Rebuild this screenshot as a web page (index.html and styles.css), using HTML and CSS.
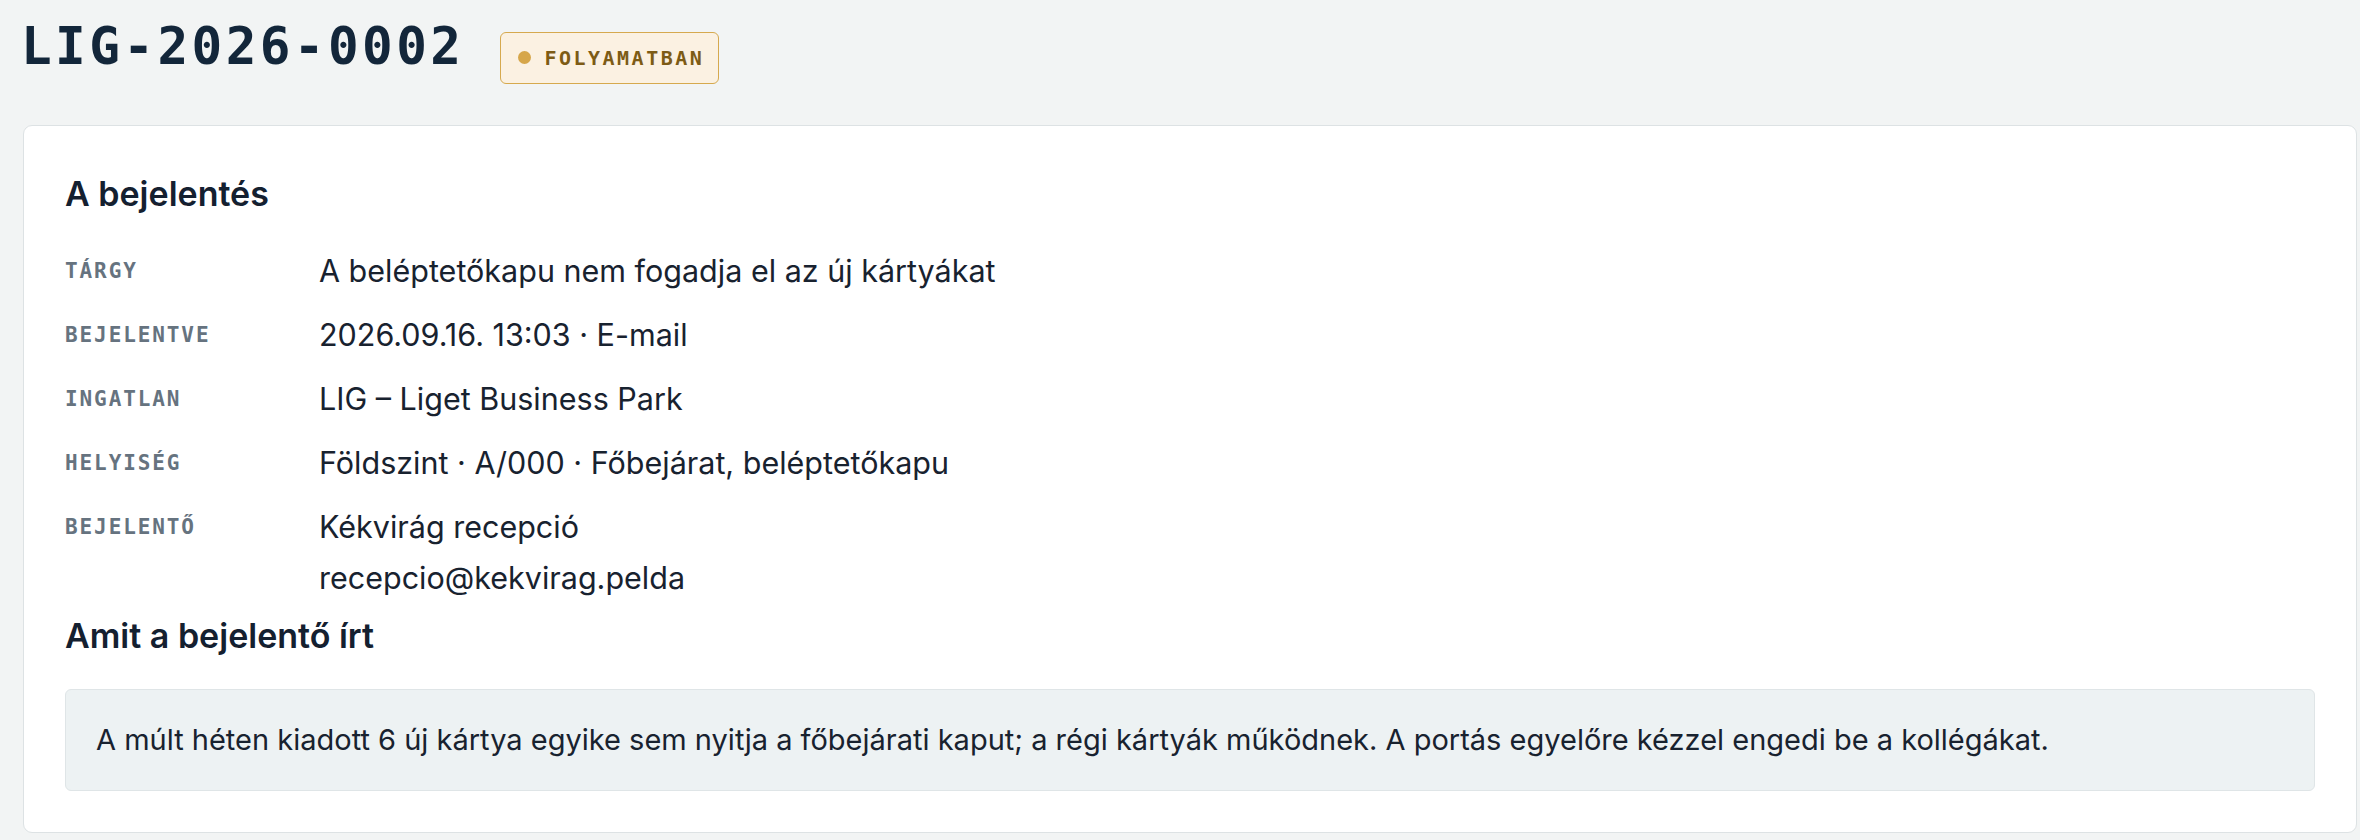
FILE: index.html
```html
<!DOCTYPE html>
<html lang="hu">
<head>
<meta charset="utf-8">
<title>LIG-2026-0002</title>
<link rel="stylesheet" href="styles.css">
</head>
<body>
<div class="page">
  <header class="header">
    <h1 class="ticket-id">LIG-2026-0002</h1>
    <span class="badge"><span class="badge-dot"></span>FOLYAMATBAN</span>
  </header>
  <section class="card">
    <h2 class="section-title">A bejelentés</h2>
    <dl class="details">
      <dt class="label">TÁRGY</dt>
      <dd class="value">A beléptetőkapu nem fogadja el az új kártyákat</dd>
      <dt class="label">BEJELENTVE</dt>
      <dd class="value">2026.09.16. 13:03 · E-mail</dd>
      <dt class="label">INGATLAN</dt>
      <dd class="value">LIG – Liget Business Park</dd>
      <dt class="label">HELYISÉG</dt>
      <dd class="value">Földszint · A/000 · Főbejárat, beléptetőkapu</dd>
      <dt class="label">BEJELENTŐ</dt>
      <dd class="value">Kékvirág recepció<div class="value-sub">recepcio@kekvirag.pelda</div></dd>
    </dl>
    <h2 class="section-title section-title-2">Amit a bejelentő írt</h2>
    <div class="quote">A múlt héten kiadott 6 új kártya egyike sem nyitja a főbejárati kaput; a régi kártyák működnek. A portás egyelőre kézzel engedi be a kollégákat.</div>
  </section>
</div>
</body>
</html>
```
FILE: styles.css
```css
* { box-sizing: border-box; }
html, body { margin: 0; padding: 0; }
body {
  background: #f2f4f4;
  font-family: Inter, "Noto Sans", sans-serif;
  color: #17212e;
}
.page {
  padding: 16px 3px 8px 23px;
}
.header {
  display: flex;
  align-items: baseline;
  gap: 36px;
  margin-left: -2px;
}
.ticket-id {
  margin: 0;
  font-family: "DejaVu Sans Mono", monospace;
  font-weight: 700;
  font-size: 51px;
  line-height: 61px;
  letter-spacing: 3.4px;
  color: #13263a;
}
.badge {
  display: inline-flex;
  align-items: center;
  gap: 13px;
  padding: 13px 14px 13px 17px;
  border: 1.5px solid #d6a94e;
  border-radius: 6px;
  background: #fbf1e2;
  font-family: "DejaVu Sans Mono", monospace;
  font-weight: 700;
  font-size: 20px;
  line-height: 24px;
  letter-spacing: 2.5px;
  color: #7d5b15;
}
.badge-dot {
  width: 13px;
  height: 13px;
  border-radius: 50%;
  background: #d6a64a;
}
.card {
  margin-top: 41px;
  background: #ffffff;
  border: 1.5px solid #dde2e4;
  border-radius: 9px;
  padding: 42px 41px 41px 41px;
}
.section-title {
  margin: 0;
  font-size: 34px;
  font-weight: 600;
  line-height: 44px;
  color: #142030;
  padding-top: 4px;
}
.details {
  display: grid;
  grid-template-columns: 254px 1fr;
  row-gap: 21px;
  margin: 33px 0 0 0;
}
.label {
  font-family: "DejaVu Sans Mono", monospace;
  font-weight: 700;
  font-size: 21px;
  letter-spacing: 1.9px;
  line-height: 42px;
  color: #66737f;
  padding-top: 1px;
}
.value {
  margin: 0;
  font-size: 30.5px;
  line-height: 43px;
  color: #18222f;
}
.value-sub {
  margin-top: 8px;
}
.section-title-2 {
  margin-top: 11px;
}
.quote {
  margin-top: 31px;
  background: #edf2f3;
  border: 1.5px solid #dfe5e7;
  border-radius: 6px;
  padding: 29px 30px;
  font-size: 29px;
  line-height: 42px;
  color: #18222f;
}
```
